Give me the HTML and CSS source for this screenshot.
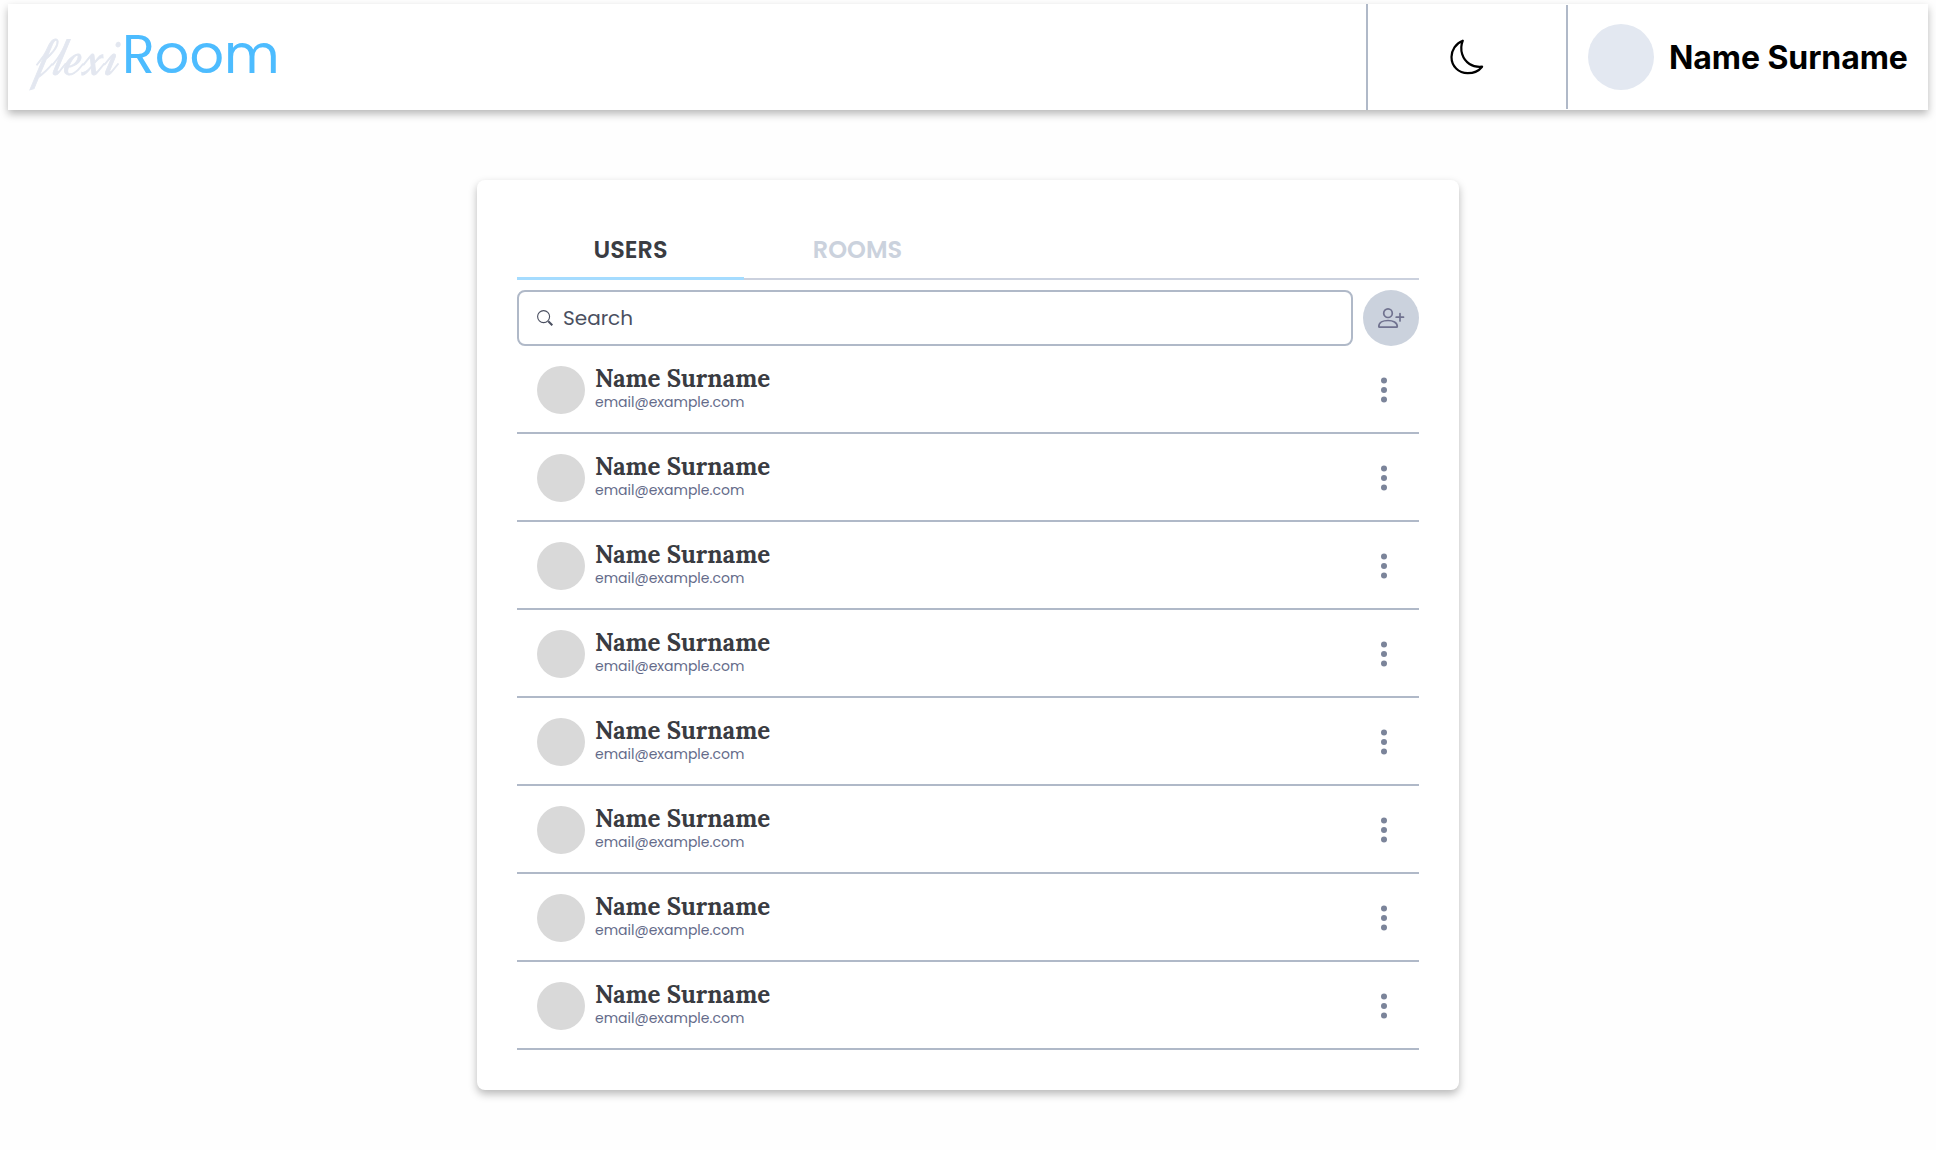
FILE: index.html
```html
<!DOCTYPE html>
<html lang="en">
<head>
<meta charset="utf-8">
<title>flexiRoom</title>
<link rel="stylesheet" href="styles.css">
</head>
<body>
<svg class="sprite" aria-hidden="true">
  <symbol id="dots" viewBox="0 0 6 26"><circle cx="3" cy="3.5" r="3"/><circle cx="3" cy="13" r="3"/><circle cx="3" cy="22.5" r="3"/></symbol>
</svg>
<header class="topbar">
  <div class="logo"><span class="logo-flexi">flexi</span><span class="logo-room">Room</span></div>
  <button class="theme" aria-label="Theme">
    <svg width="36" height="38" viewBox="0 0 36 38"><path d="M13.8 2.7C6.700 5.500 2.500 12 2.500 19C2.500 28.200 9.500 35.200 18.700 35.200C25 35.200 30.300 32.300 33.100 28.700C29 29.100 24.500 28.700 20.500 26C13.700 21.500 10 12 13.800 2.700Z"/></svg>
  </button>
  <div class="profile"><span class="profile-avatar"></span><span class="profile-name">Name Surname</span></div>
</header>
<main class="card">
  <nav class="tabs"><a class="tab tab-active"><span>USERS</span></a><a class="tab"><span>ROOMS</span></a></nav>
  <div class="tools">
    <label class="search">
      <svg width="16" height="16" viewBox="0 0 16 16"><circle cx="6.600" cy="6.600" r="6"/><path class="handle" d="M11.300 11.300L15.300 15.300"/></svg>
      <span>Search</span>
    </label>
    <button class="add" aria-label="Add user">
      <svg width="28" height="22" viewBox="0 0 28 22"><circle cx="11" cy="6.200" r="4.300"/><path d="M1.800 19.500C1.800 15.500 6 13.500 11 13.500S20.300 15.500 20.300 19.500Q20.300 20.200 19.500 20.200H2.600Q1.800 20.200 1.800 19.500ZM23 6.500V14M19.200 10.200H26.500"/></svg>
    </button>
  </div>
  <ul class="users">
    <li class="user"><span class="avatar"></span><div class="info"><span class="name">Name Surname</span><span class="email">email@example.com</span></div><svg class="more"><use href="#dots"/></svg></li>
    <li class="user"><span class="avatar"></span><div class="info"><span class="name">Name Surname</span><span class="email">email@example.com</span></div><svg class="more"><use href="#dots"/></svg></li>
    <li class="user"><span class="avatar"></span><div class="info"><span class="name">Name Surname</span><span class="email">email@example.com</span></div><svg class="more"><use href="#dots"/></svg></li>
    <li class="user"><span class="avatar"></span><div class="info"><span class="name">Name Surname</span><span class="email">email@example.com</span></div><svg class="more"><use href="#dots"/></svg></li>
    <li class="user"><span class="avatar"></span><div class="info"><span class="name">Name Surname</span><span class="email">email@example.com</span></div><svg class="more"><use href="#dots"/></svg></li>
    <li class="user"><span class="avatar"></span><div class="info"><span class="name">Name Surname</span><span class="email">email@example.com</span></div><svg class="more"><use href="#dots"/></svg></li>
    <li class="user"><span class="avatar"></span><div class="info"><span class="name">Name Surname</span><span class="email">email@example.com</span></div><svg class="more"><use href="#dots"/></svg></li>
    <li class="user"><span class="avatar"></span><div class="info"><span class="name">Name Surname</span><span class="email">email@example.com</span></div><svg class="more"><use href="#dots"/></svg></li>
  </ul>
</main>
</body>
</html>
```
FILE: styles.css
```css
* { box-sizing: border-box; }
body { margin: 0; min-height: 1150px; padding: 4px 8px 0; background: #fefefe; font-family: Poppins, Inter, sans-serif; }
button { border: 0; padding: 0; background: none; font: inherit; }
svg { display: block; fill: none; flex: none; }
.sprite { position: absolute; width: 0; height: 0; }

.topbar { display: flex; align-items: center; height: 106px; background: #fff; box-shadow: 0 4px 8px rgba(0, 0, 0, .28); }
.logo { flex: 1; display: flex; align-items: baseline; padding: 0 0 7px 32px; line-height: 72px; }
.logo-flexi { width: 82px; font: 400 60px/20px Dynalight, Sacramento, "Liberation Serif", serif; letter-spacing: 1px; color: #e3e7f0; -webkit-text-stroke: .8px #e3e7f0; transform: translateY(2px); }
.logo-room { font-size: 54px; color: #4dbcff; }
.theme { display: flex; align-items: center; justify-content: center; width: 200px; height: 106px; border-left: 2px solid #b0b9c8; }
.theme path { stroke: #000; stroke-width: 2.2; stroke-linejoin: round; }
.profile { display: flex; align-items: center; gap: 15px; width: 362px; height: 104px; padding-left: 20px; border-left: 2px solid #b0b9c8; }
.profile-avatar { width: 66px; height: 66px; border-radius: 50%; background: #e3e8f1; }
.profile-name { padding-top: 2px; font: 700 32px/40px Inter, sans-serif; letter-spacing: -.08px; white-space: nowrap; color: #000; }

.card { width: 982px; height: 910px; margin: 70px auto 0; padding: 40px; background: #fff; border-radius: 8px; box-shadow: 0 4px 8px rgba(0, 0, 0, .28); }
.tabs { display: flex; height: 60px; box-shadow: inset 0 -2px #cbd1de; }
.tab { display: flex; justify-content: center; width: 227px; height: 60px; padding-top: 12px; font-size: 24px; font-weight: 600; line-height: 36px; color: #cbd2dd; }
.tab-active { color: #3a3c42; border-bottom: 3px solid #a5dcff; }
.tools { display: flex; gap: 10px; margin-top: 10px; }
.search { flex: 1; display: flex; align-items: center; gap: 10px; height: 56px; padding-left: 18px; border: 2px solid #b0b9c8; border-radius: 8px; font-size: 20px; color: #4a4f60; }
.search svg { stroke: #4a4f60; stroke-width: 1.1; }
.search .handle { stroke-width: 2; }
.add { display: flex; align-items: center; justify-content: center; width: 56px; height: 56px; border-radius: 50%; background: #cbd2dd; }
.add svg { stroke: #70728f; stroke-width: 1.7; stroke-linecap: round; }
.users { margin: 0; padding: 0; list-style: none; }
.user { display: flex; align-items: center; height: 88px; padding: 2px 32px 0 20px; border-bottom: 2px solid #b0b9c8; }
.avatar { width: 48px; height: 48px; border-radius: 50%; background: #d9d9d9; }
.info { flex: 1; display: flex; flex-direction: column; margin-left: 10px; padding-bottom: 2px; }
.name { font: 700 24px/28px Lora, "Liberation Serif", serif; color: #3a3c42; }
.email { margin-top: -1px; margin-bottom: 1px; font-size: 14px; line-height: 20px; color: #646b8a; }
.more { width: 6px; height: 26px; fill: #7b849a; }
```
